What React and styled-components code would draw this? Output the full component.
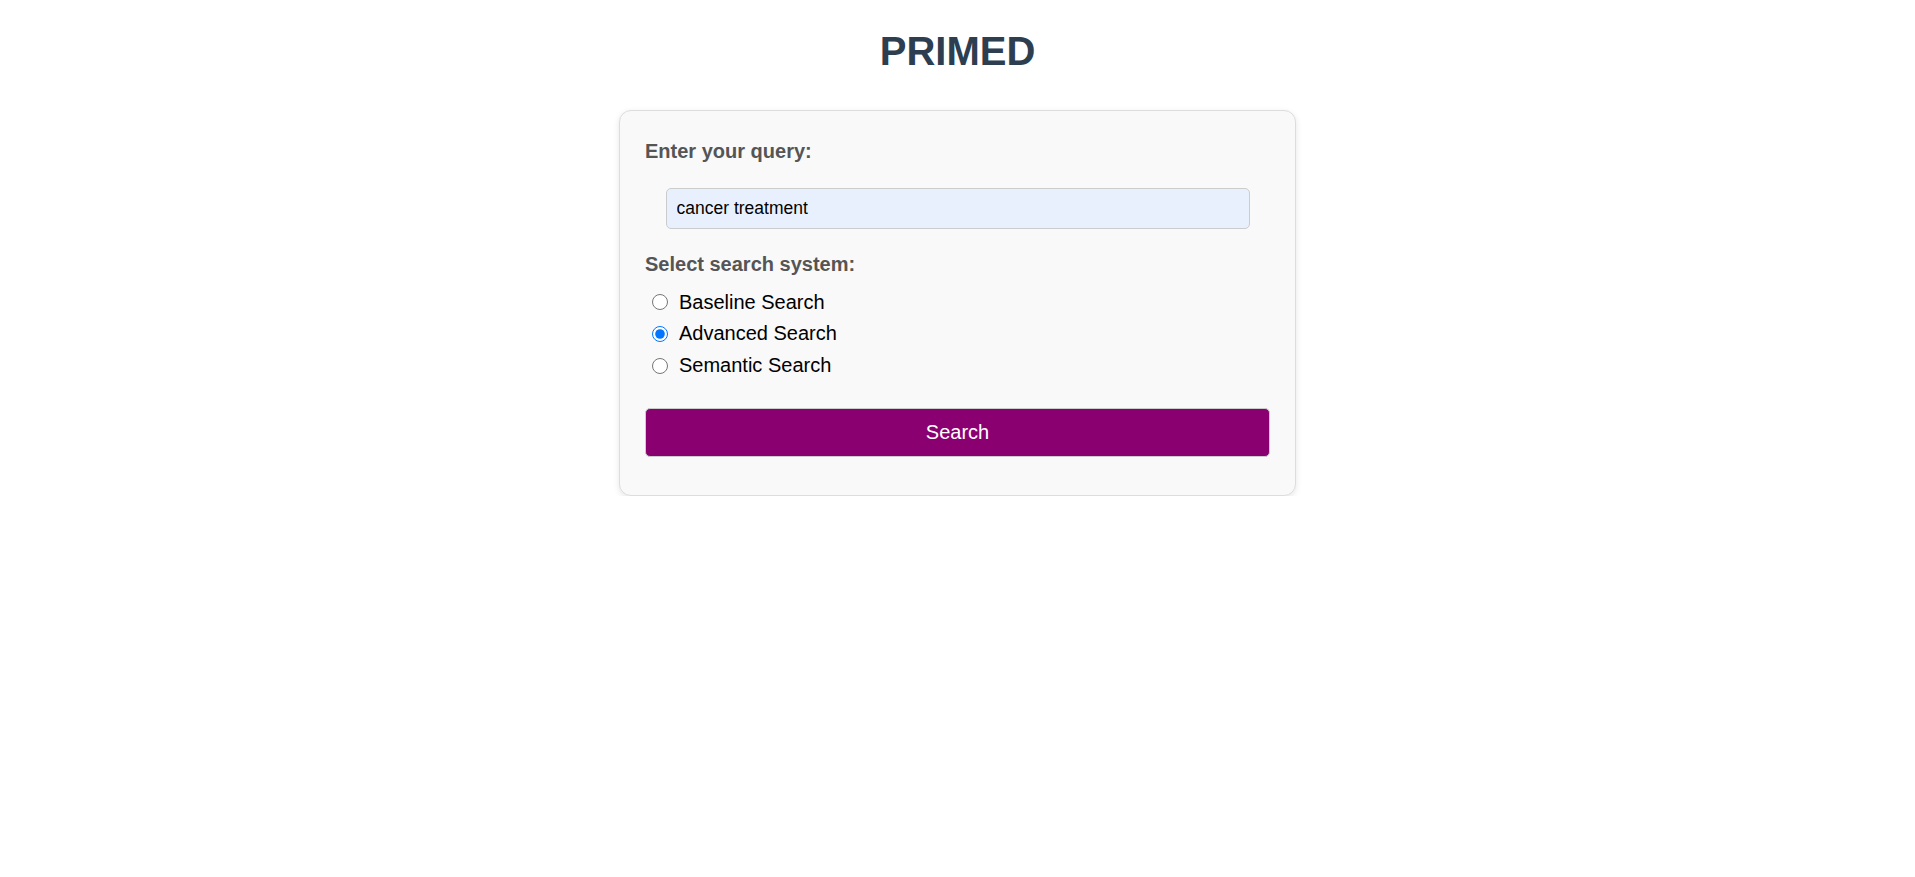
import React, { useState } from 'react'
import styled, { createGlobalStyle } from 'styled-components'

const GlobalStyle = createGlobalStyle`
  body {
    margin: 0;
    background: #fff;
    font-family: "Liberation Sans", Arial, sans-serif;
  }
`

const Page = styled.div`
  display: flex;
  flex-direction: column;
  align-items: center;
`

const Title = styled.h1`
  margin: 28px 0 36px;
  font-size: 40px;
  line-height: 46px;
  font-weight: 700;
  color: #2c3e50;
`

const Card = styled.form`
  box-sizing: border-box;
  width: 677px;
  padding: 29px 25px 38px;
  background: #f9f9f9;
  border: 1px solid #ddd;
  border-radius: 12px;
  box-shadow: 0 2px 6px rgba(0, 0, 0, 0.1);
  display: flex;
  flex-direction: column;
`

const Label = styled.label`
  display: block;
  font-size: 20px;
  line-height: 23px;
  font-weight: 700;
  color: #555;
  margin-top: ${props => props.top || 0}px;
`

const QueryInput = styled.input`
  box-sizing: border-box;
  width: 584px;
  height: 41px;
  margin: 25px auto 0;
  padding: 0 10px;
  font-family: "Liberation Sans", Arial, sans-serif;
  font-size: 17.5px;
  color: #000;
  background: #e8f0fe;
  border: 1px solid #ccc;
  border-radius: 5px;
  outline: none;
`

const Options = styled.div`
  display: flex;
  flex-direction: column;
  gap: 8.75px;
  margin-top: 14.5px;
`

const Option = styled.label`
  display: flex;
  align-items: center;
  height: 23px;
  font-size: 20px;
  color: #000;
  cursor: pointer;

  input {
    width: 16px;
    height: 16px;
    margin: 0 11px 0 7px;
  }
`

const SearchButton = styled.button`
  margin-top: 31px;
  height: 49px;
  width: 100%;
  background: #8b0070;
  color: #fff;
  font-family: "Liberation Sans", Arial, sans-serif;
  font-size: 20px;
  border: 1px solid #ccc;
  border-radius: 5px;
  cursor: pointer;
`

const systems = ['Baseline Search', 'Advanced Search', 'Semantic Search']

export default function App() {
  const [query, setQuery] = useState('cancer treatment')
  const [system, setSystem] = useState('Advanced Search')

  return (
    <>
      <GlobalStyle />
      <Page>
        <Title>PRIMED</Title>
        <Card onSubmit={e => e.preventDefault()}>
          <Label htmlFor="query">Enter your query:</Label>
          <QueryInput id="query" value={query} onChange={e => setQuery(e.target.value)} />
          <Label top={24}>Select search system:</Label>
          <Options>
            {systems.map(s => (
              <Option key={s}>
                <input
                  type="radio"
                  name="system"
                  checked={system === s}
                  onChange={() => setSystem(s)}
                />
                {s}
              </Option>
            ))}
          </Options>
          <SearchButton type="submit">Search</SearchButton>
        </Card>
      </Page>
    </>
  )
}
